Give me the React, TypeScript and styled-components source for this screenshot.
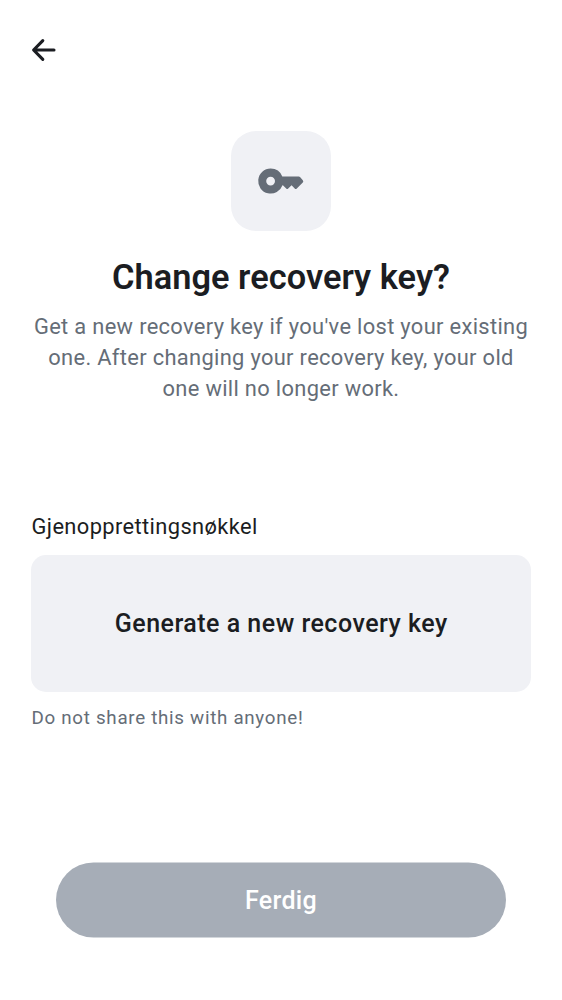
import React from 'react';
import styled, { createGlobalStyle } from 'styled-components';

const Global = createGlobalStyle`
  * { box-sizing: border-box; }
  body { margin: 0; background: #fff; font-family: Roboto, sans-serif; color: #1b1d22; }
  button { font-family: inherit; border: 0; padding: 0; margin: 0; }
`;
const Screen = styled.main`
  display: flex; flex-direction: column; width: 562px; height: 1000px; padding: 31px 31px 62px;
`;
const BackButton = styled.button`
  display: flex; width: 38px; height: 38px; margin-left: -6px; background: none; color: #1b1d22;
`;
const Header = styled.header`
  display: flex; flex-direction: column; align-items: center; margin-top: 62px; text-align: center;
`;
const IconTile = styled.div`
  display: flex; align-items: center; justify-content: center; width: 100px; height: 100px;
  border-radius: 25px; background: #f0f1f5; color: #656d77;
`;
const Title = styled.h1`
  margin: 25px 0 0; font-size: 34.375px; line-height: 42px; font-weight: 600; letter-spacing: 0.03px; white-space: nowrap;
`;
const Description = styled.p`
  margin: 13px 0 0; font-size: 21.875px; line-height: 31.2px; letter-spacing: 0.33px; color: #656d77; white-space: nowrap;
`;
const Field = styled.section`
  display: flex; flex-direction: column; margin-top: 106.4px;
`;
const Label = styled.span`
  padding-left: 0.5px; font-size: 21.875px; line-height: 31px; letter-spacing: 0.38px;
`;
const GenerateButton = styled.button`
  height: 137px; margin-top: 13px; border-radius: 15px; background: #f0f1f5; color: #1b1d22;
  font-size: 25px; font-weight: 500; letter-spacing: 0.49px; text-indent: 0.5px;
`;
const Hint = styled.span`
  margin-top: 12px; padding-left: 0.5px; font-size: 18.75px; line-height: 28px; letter-spacing: 0.71px; color: #656d77;
`;
const DoneButton = styled.button`
  height: 75px; margin: auto 25px 0; border-radius: 38px; background: #a6adb7; color: #fff;
  font-size: 25px; font-weight: 500; letter-spacing: 0.3px; transform: translateY(-0.5px);
`;

export default function App() {
  return (
    <>
      <Global />
      <Screen>
        <BackButton aria-label="Back">
          <svg width="38" height="38" viewBox="0 0 38 38" fill="none" stroke="currentColor" strokeWidth="3.1" strokeLinecap="round" strokeLinejoin="round">
            <path d="M29 19H9.2M17.8 9.6 8.6 19l9.2 9.4" />
          </svg>
        </BackButton>
        <Header>
          <IconTile>
            <svg width="50" height="50" viewBox="0 0 50 50" fill="currentColor">
              <path fillRule="evenodd" d="M14.6 12.6a12.5 12.5 0 1 0 11.9 16.6h.4l3.3 3.2q1 1 2 0l3.4-3.1 3.1 3.1q1 1 2.1 0L46.8 26.4q1-1 0-2.2l-2.8-3.1q-.5-.5-1.2-.5H26.3A12.5 12.5 0 0 0 14.6 12.6Zm0 8.1a4.4 4.4 0 1 1 0 8.8 4.4 4.4 0 0 1 0-8.8Z" />
            </svg>
          </IconTile>
          <Title>Change recovery key?</Title>
          <Description>
            Get a new recovery key if you've lost your existing<br />
            one. After changing your recovery key, your old<br />
            one will no longer work.
          </Description>
        </Header>
        <Field>
          <Label>Gjenopprettingsnøkkel</Label>
          <GenerateButton>Generate a new recovery key</GenerateButton>
          <Hint>Do not share this with anyone!</Hint>
        </Field>
        <DoneButton disabled>Ferdig</DoneButton>
      </Screen>
    </>
  );
}
